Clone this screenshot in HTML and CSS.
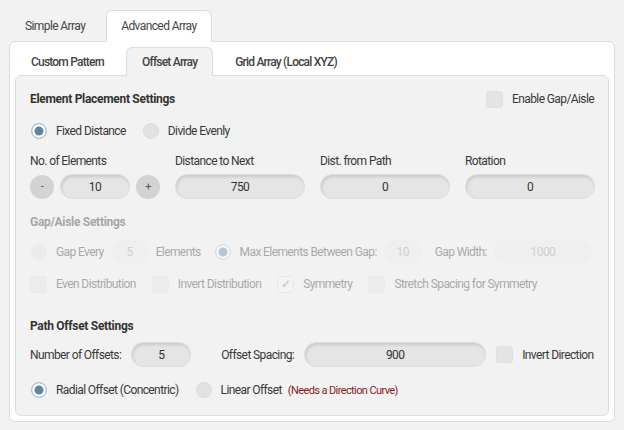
FILE: index.html
```html
<!DOCTYPE html>
<html lang="en">
<head>
    <meta charset="UTF-8">
    <title>Array Tool</title>
    <link rel="stylesheet" href="styles.css">
</head>
<body>

    <!-- Outer tabs -->
    <div class="tabs outer-tabs">
        <div class="tab">Simple Array</div>
        <div class="tab active">Advanced Array</div>
    </div>

    <div class="outer-panel">
        <!-- Inner tabs -->
        <div class="tabs inner-tabs">
            <div class="tab">Custom Pattern</div>
            <div class="tab active">Offset Array</div>
            <div class="tab">Grid Array (Local XYZ)</div>
        </div>

        <div class="inner-panel">
            <div class="section-head">
                <h3>Element Placement Settings</h3>
                <label class="item"><span class="check"></span>Enable Gap/Aisle</label>
            </div>

            <div class="row radio-row">
                <label class="item"><span class="radio on"></span>Fixed Distance</label>
                <label class="item"><span class="radio"></span>Divide Evenly</label>
            </div>

            <div class="fields">
                <div class="field">
                    <div class="field-label">No. of Elements</div>
                    <div class="stepper">
                        <span class="step-btn">-</span>
                        <span class="input small">10</span>
                        <span class="step-btn">+</span>
                    </div>
                </div>
                <div class="field">
                    <div class="field-label">Distance to Next</div>
                    <span class="input">750</span>
                </div>
                <div class="field">
                    <div class="field-label">Dist. from Path</div>
                    <span class="input">0</span>
                </div>
                <div class="field">
                    <div class="field-label">Rotation</div>
                    <span class="input">0</span>
                </div>
            </div>

            <!-- Gap / Aisle (disabled until enabled) -->
            <div class="disabled">
                <h3 class="gap-head">Gap/Aisle Settings</h3>
                <div class="row gap-row">
                    <label class="item"><span class="radio"></span>Gap Every</label>
                    <span class="input tiny">5</span>
                    <span>Elements</span>
                    <label class="item spaced"><span class="radio on"></span>Max Elements Between Gap:</label>
                    <span class="input tiny">10</span>
                    <span class="spaced">Gap Width:</span>
                    <span class="input wide">1000</span>
                </div>
                <div class="row check-row">
                    <label class="item"><span class="check"></span>Even Distribution</label>
                    <label class="item"><span class="check"></span>Invert Distribution</label>
                    <label class="item"><span class="check ticked">&#10003;</span>Symmetry</label>
                    <label class="item"><span class="check"></span>Stretch Spacing for Symmetry</label>
                </div>
            </div>

            <h3 class="path-head">Path Offset Settings</h3>
            <div class="row offset-row">
                <span>Number of Offsets:</span>
                <span class="input offsets">5</span>
                <span class="spaced-lg">Offset Spacing:</span>
                <span class="input spacing">900</span>
                <label class="item"><span class="check"></span>Invert Direction</label>
            </div>
            <div class="row radio-row last">
                <label class="item"><span class="radio on"></span>Radial Offset (Concentric)</label>
                <label class="item"><span class="radio"></span>Linear Offset <span class="note">(Needs a Direction Curve)</span></label>
            </div>
        </div>
    </div>

</body>
</html>
```

FILE: styles.css
```css
* {
    margin: 0;
    padding: 0;
    box-sizing: border-box;
}

body {
    background-color: #f2f2f2;
    font-family: 'Roboto', 'Liberation Sans', sans-serif;
    font-size: 12px;
    letter-spacing: -0.6px;
    color: #383838;
    white-space: nowrap;
    padding: 10px 9px 12px 9px;
}

h3 {
    font-size: 12px;
    font-weight: 700;
    letter-spacing: -0.3px;
    color: #333;
    line-height: 16px;
}

/* Tabs */
.tabs {
    display: flex;
    gap: 6px;
}

.tab {
    color: #444;
    padding: 0 14px;
    border: 1px solid transparent;
    border-bottom: none;
    border-radius: 6px 6px 0 0;
}

.outer-tabs {
    padding-left: 1px;
}

.outer-tabs .tab {
    height: 32px;
    line-height: 30px;
}

.outer-tabs .tab.active {
    background-color: #fff;
    border-color: #ddd;
    position: relative;
    z-index: 1;
}

.outer-panel {
    background-color: #fff;
    border: 1px solid #ddd;
    border-radius: 6px;
    margin-top: -1px;
    padding: 5px 5px 5px 5px;
}

.inner-tabs .tab {
    height: 29px;
    line-height: 28px;
    padding: 0 15px;
    font-weight: 500;
    letter-spacing: -0.8px;
}

.inner-tabs .tab.active {
    background-color: #f2f2f2;
    border-color: #ddd;
    position: relative;
    z-index: 1;
}

.inner-panel {
    background-color: #f2f2f2;
    border: 1px solid #ddd;
    border-radius: 6px;
    margin-top: -1px;
    padding: 14px 14px 15px 14px;
}

/* Rows */
.section-head {
    display: flex;
    justify-content: space-between;
    align-items: center;
    height: 18px;
}

.row {
    display: flex;
    align-items: center;
}

.item {
    display: flex;
    align-items: center;
    gap: 9px;
}

.radio-row {
    height: 20px;
    margin-top: 13px;
    gap: 16px;
}

.radio-row.last {
    margin-top: 13px;
}

/* Controls */
.radio {
    width: 16px;
    height: 16px;
    border-radius: 50%;
    background-color: #e2e2e2;
    border: 1px solid #dcdcdc;
    margin-left: 1px;
}

.radio.on {
    background-color: #5b87a3;
    border: 1.5px solid #b4c4d0;
    box-shadow: inset 0 0 0 2.5px #fff;
}

.check {
    width: 17px;
    height: 17px;
    border-radius: 3px;
    background-color: #e4e4e4;
    border: 1px solid #e0e0e0;
    display: flex;
    align-items: center;
    justify-content: center;
    font-size: 12px;
    color: #777;
}

.check.ticked {
    background-color: #f6f6f6;
    border-color: #d8d8d8;
}

.input {
    display: block;
    height: 25px;
    line-height: 25px;
    text-align: center;
    background-color: #e5e5e5;
    border: 1px solid #dedede;
    border-radius: 12px;
    box-shadow: inset 1px 2px 3px rgba(0, 0, 0, 0.12);
    color: #333;
}

.fields {
    display: grid;
    grid-template-columns: repeat(4, 130px);
    column-gap: 15px;
    margin-top: 13px;
}

.field-label {
    line-height: 14px;
    margin-bottom: 6px;
}

.stepper {
    display: flex;
    align-items: center;
    gap: 6px;
}

.input.small {
    width: 71px;
}

.step-btn {
    width: 24px;
    height: 24px;
    border-radius: 50%;
    background-color: #d3d3d3;
    color: #555;
    text-align: center;
    line-height: 23px;
    font-size: 11px;
}

/* Disabled gap section */
.disabled {
    opacity: 0.4;
}

.gap-head {
    margin-top: 15px;
}

.gap-row {
    margin-top: 9px;
    gap: 7px;
}

.input.tiny {
    width: 38px;
    background-color: #ededed;
    border-color: #efefef;
    box-shadow: none;
    color: #999;
}

.input.wide {
    width: 98px;
    background-color: #ededed;
    border-color: #efefef;
    box-shadow: none;
    color: #999;
}

.spaced {
    margin-left: 6px;
}

.check-row {
    margin-top: 10px;
    height: 20px;
    gap: 16px;
}

/* Path offset */
.path-head {
    margin-top: 24px;
}

.offset-row {
    margin-top: 8px;
    gap: 10px;
}

.input.offsets {
    width: 60px;
}

.spaced-lg {
    margin-left: 20px;
}

.input.spacing {
    width: 182px;
}

.note {
    color: #8b1a1a;
    font-size: 11px;
    margin-left: -3px;
}
```
